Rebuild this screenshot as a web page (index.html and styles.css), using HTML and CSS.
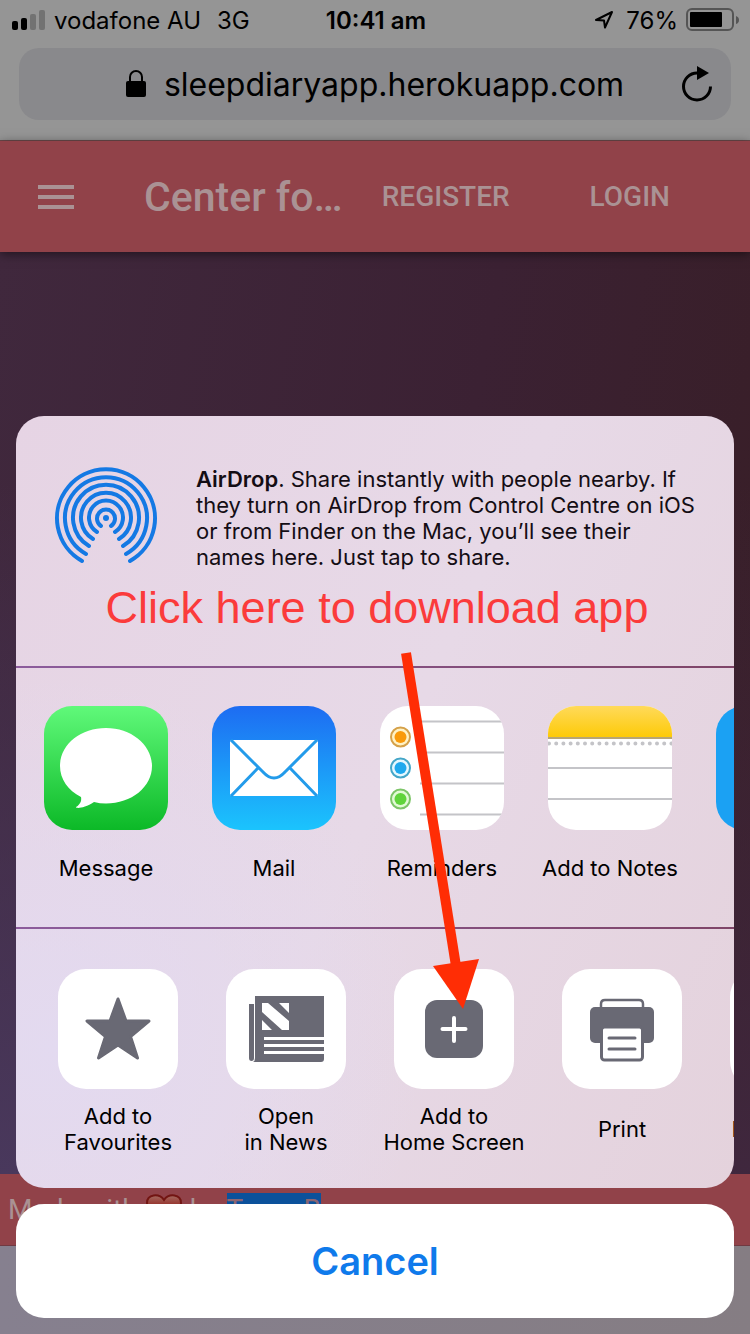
FILE: index.html
```html
<!DOCTYPE html>
<html lang="en">
<head>
<meta charset="utf-8">
<meta name="viewport" content="width=device-width, initial-scale=1">
<title>Sleep Diary</title>
<link rel="stylesheet" href="styles.css">
</head>
<body>
<div class="screen">
  <div class="status">
    <div class="status-side">
      <svg class="signal" width="34" height="20" viewBox="0 0 34 20" aria-hidden="true"><rect x="0" y="11" width="6" height="9" rx="2"/><rect x="9" y="8" width="6" height="12" rx="2"/><rect class="off" x="18" y="4" width="6" height="16" rx="2"/><rect class="off" x="27" y="0" width="6" height="20" rx="2"/></svg>
      <span>vodafone AU</span>
      <span class="network">3G</span>
    </div>
    <strong class="clock">10:41 am</strong>
    <div class="status-side status-right">
      <svg class="locate" width="20" height="20" viewBox="0 0 20 20" aria-hidden="true"><path d="M2 10 18 2 11 17.500 10 10.500Z"/></svg>
      <span class="percent">76%</span>
      <svg width="54" height="24" viewBox="0 0 54 24" aria-hidden="true"><rect x="1" y="1" width="46" height="21" rx="5" fill="none" stroke="#555" stroke-width="2"/><rect x="4" y="4" width="32" height="15" rx="1"/><path d="M50 8q3 1 3 4t-3 4Z" fill="#555"/></svg>
    </div>
  </div>
  <div class="address-row">
    <div class="address">
      <svg width="20" height="28" viewBox="0 0 20 28" aria-hidden="true"><path d="M4 13V7a6 6 0 0 1 12 0v6" fill="none" stroke="#000" stroke-width="2"/><rect y="11" width="20" height="16" rx="2"/></svg>
      <span>sleepdiaryapp.herokuapp.com</span>
      <button class="reload" aria-label="Reload"><svg width="34" height="38" viewBox="0 0 34 38"><path d="M30.500 21.500A13.500 13.500 0 1 1 17 8" fill="none" stroke="#000" stroke-width="3"/><path d="M17 1v14l12-7Z"/></svg></button>
    </div>
  </div>
  <header class="appbar">
    <button class="menu" aria-label="Menu"><svg width="36" height="24" viewBox="0 0 36 24"><path d="M0 2h36M0 12h36M0 22h36" stroke="#aa9294" stroke-width="4"/></svg></button>
    <h1>Center fo…</h1>
    <a class="nav register" href="#register">REGISTER</a>
    <a class="nav" href="#login">LOGIN</a>
  </header>
  <main class="backdrop"></main>
  <footer class="footer">
    <span>Made with</span>
    <svg class="heart" width="36" height="32" viewBox="0 0 36 32" aria-hidden="true"><defs><linearGradient id="heart" x2="0" y2="1"><stop stop-color="#a46960"/><stop offset=".5" stop-color="#8e1712"/></linearGradient></defs><path d="M18 30C9 24 1 17 1 9 1 0 13-1 18 6 23-1 35 0 35 9c0 8-8 15-17 21Z" fill="url(#heart)" stroke="#721512" stroke-width="2"/></svg>
    <span>by</span>
    <a href="#team">Team B</a>
  </footer>
  <div class="toolbar"></div>

  <div class="overlay" role="dialog" aria-label="Share">
    <div class="sheet">
      <section class="airdrop">
        <div class="airdrop-info">
          <svg class="waves" width="104" height="104" viewBox="-52 -52 104 104" aria-hidden="true"><circle r="3" class="dot"/><path d="M-5 8A9 9 0 1 1 5 8M-9 14A17 17 0 1 1 9 14M-13 21A25 25 0 1 1 13 21M-17 28A33 33 0 1 1 17 28M-20 36A41 41 0 1 1 20 36M-24 43A49 49 0 1 1 24 43"/></svg>
          <p><strong>AirDrop</strong>. Share instantly with people nearby. If<br>they turn on AirDrop from Control Centre on iOS<br>or from Finder on the Mac, you’ll see their<br>names here. Just tap to share.</p>
        </div>
        <p class="hint">Click here to download app</p>
      </section>
      <section class="row apps">
        <button class="item">
          <svg class="tile" viewBox="0 0 124 124"><defs><linearGradient id="green" x2="0" y2="1"><stop stop-color="#60f97a"/><stop offset="1" stop-color="#0cb927"/></linearGradient></defs><rect width="124" height="124" fill="url(#green)"/><path d="M62 22C36.500 22 16 38.500 16 60c0 13 8 24.500 21 31 1 5-2 8-5 10 0 2 9 1 18-5 4 1 8 1.500 12 1.500 25.500 0 46-16.500 46-37.500S87.500 22 62 22Z" fill="#fff"/></svg>
          <span>Message</span>
        </button>
        <button class="item">
          <svg class="tile" viewBox="0 0 124 124"><defs><linearGradient id="blue" x2="0" y2="1"><stop stop-color="#1d6cf2"/><stop offset="1" stop-color="#1bc4fd"/></linearGradient></defs><rect width="124" height="124" fill="url(#blue)"/><rect x="18" y="34" width="88" height="56" rx="2" fill="#fff"/><path d="M19 34 51 66Q62 78 73 66L105 34M19 90 46 62M105 90 78 62" fill="none" stroke="#239bea" stroke-width="3"/></svg>
          <span>Mail</span>
        </button>
        <button class="item">
          <svg class="tile" viewBox="0 0 124 124"><rect width="124" height="124" fill="#fff"/><path d="M40 15.500h84M40 46.500h84M40 77.500h84M40 108.500h84" stroke="#c4c4c8" stroke-width="2"/><g fill="#fff2c5" stroke="#d5a149" stroke-width="2"><circle cx="20.500" cy="31" r="9.500"/><circle cx="20.500" cy="62" r="9.500" fill="#e4f8ff" stroke="#44a6c8"/><circle cx="20.500" cy="93" r="9.500" fill="#e2fad5" stroke="#7dc568"/></g><circle cx="20.500" cy="31" r="6" fill="#f99a0b"/><circle cx="20.500" cy="62" r="6" fill="#1fa9ee"/><circle cx="20.500" cy="93" r="6" fill="#60d43b"/></svg>
          <span>Reminders</span>
        </button>
        <button class="item">
          <svg class="tile" viewBox="0 0 124 124"><defs><linearGradient id="yellow" x2="0" y2="1"><stop stop-color="#ffda5a"/><stop offset="1" stop-color="#fdca08"/></linearGradient></defs><rect width="124" height="124" fill="#fff"/><rect width="124" height="31" fill="url(#yellow)"/><path d="M0 32h124" stroke="#b7a675" stroke-width="2"/><path d="M0 62h124M0 93h124" stroke="#c4c4c8" stroke-width="2"/><path d="M1 37.500h124" stroke="#c4c4c8" stroke-width="4" stroke-linecap="round" stroke-dasharray="0 7.200"/></svg>
          <span>Add to Notes</span>
        </button>
        <button class="item" aria-label="More apps">
          <svg class="tile" viewBox="0 0 124 124"><rect width="124" height="124" fill="#1ba1f3"/></svg>
        </button>
      </section>
      <section class="row actions">
        <button class="item">
          <svg class="tile" viewBox="0 0 120 120"><path d="m60 30 8 22h23l-18.500 15.500L79.500 89 60 76 40.500 89l7-21.500L29 52h23Z" fill="#696974" stroke="#696974" stroke-width="3" stroke-linejoin="round"/></svg>
          <span>Add to<br>Favourites</span>
        </button>
        <button class="item">
          <svg class="tile" viewBox="0 0 120 120"><path d="M29 27h69v63q0 3-3 3H27q2-1 2-4Z" fill="#696974"/><path d="M23 35h5v54q0 3-2.500 3T23 89Z" fill="#696974"/><path d="M36 34h6l21 18v9h-7L36 43ZM53 34h10v10ZM36 51v10h10Z" fill="#fff"/><path d="M38 69.500h60M38 76.500h60M38 83.500h60" stroke="#fff" stroke-width="3"/></svg>
          <span>Open<br>in News</span>
        </button>
        <button class="item">
          <svg class="tile" viewBox="0 0 120 120"><rect x="31" y="31" width="58" height="58" rx="12" fill="#696974"/><path d="M60 49v23M48.500 60h23" stroke="#fff" stroke-width="4" stroke-linecap="round"/></svg>
          <span>Add to<br>Home Screen</span>
        </button>
        <button class="item">
          <svg class="tile" viewBox="0 0 120 120"><path d="M39 40v-5q0-4 4-4h34q4 0 4 4v5" fill="none" stroke="#696974" stroke-width="2.500"/><rect x="28" y="38" width="64" height="36" rx="5" fill="#696974"/><rect x="39.500" y="58" width="41" height="33" rx="3" fill="#fff" stroke="#696974" stroke-width="3"/><path d="M47 69h26M47 80h26" stroke="#696974" stroke-width="3" stroke-linecap="round"/></svg>
          <span>Print</span>
        </button>
        <button class="item">
          <svg class="tile" viewBox="0 0 120 120" aria-hidden="true"></svg>
          <span>Bookmarks</span>
        </button>
      </section>
      <svg class="arrow" width="80" height="360" viewBox="0 0 80 360" aria-hidden="true"><path d="M6 1 56 314" stroke="#ff2d05" stroke-width="10"/><path d="M33 314 79 307 63 357Z" fill="#ff2d05"/></svg>
    </div>
    <button class="cancel">Cancel</button>
  </div>
</div>
</body>
</html>
```
FILE: styles.css
```css
* { box-sizing: border-box; }

body {
  margin: 0;
  font-family: Inter, "Liberation Sans", sans-serif;
  color: #000;
}

h1, p { margin: 0; }

button {
  padding: 0;
  border: 0;
  background: none;
  font: inherit;
  color: inherit;
}

svg { display: block; flex: none; }

.screen {
  position: relative;
  display: flex;
  flex-direction: column;
  min-height: 100vh;
  overflow: hidden;
}

.status {
  display: grid;
  grid-template-columns: 1fr auto 1fr;
  align-items: center;
  height: 40px;
  padding: 0 10px 0 12px;
  background: #959595;
  font-size: 24px;
}

.status-side { display: flex; align-items: center; gap: 8px; }
.status-right { justify-content: flex-end; }
.network { margin-left: 8px; }
.percent { margin-left: 4px; }
.clock { font-weight: 600; }
.signal .off { fill: #727272; }
.locate { fill: none; stroke: #000; stroke-width: 2; stroke-linejoin: round; }

.address-row {
  padding: 8px 19px 20px;
  background: #959595;
  border-bottom: 1px solid #6c4a4c;
}

.address {
  position: relative;
  display: flex;
  align-items: center;
  justify-content: center;
  gap: 18px;
  height: 72px;
  border-radius: 20px;
  background: #89898c;
  font-size: 32px;
}

.reload { position: absolute; right: 17px; }

.appbar {
  position: relative;
  display: flex;
  align-items: center;
  height: 111px;
  padding: 0 80px 0 38px;
  background: #914249;
  color: #aa9294;
  font-family: Roboto, "Liberation Sans", sans-serif;
  box-shadow: 0 2px 10px rgba(0, 0, 0, 0.5);
}

.appbar h1 { margin: 0 auto 0 70px; font-size: 41px; font-weight: 500; }
.nav { color: inherit; font-size: 28px; font-weight: 500; text-decoration: none; }
.register { margin-right: 80px; }

.backdrop {
  flex: 1;
  background:
    linear-gradient(to top, rgba(74, 58, 96, 0.9), rgba(74, 58, 96, 0) 75%) left / 50% 100% no-repeat,
    linear-gradient(to top, rgba(64, 40, 64, 0.9), rgba(64, 40, 64, 0) 75%) right / 50% 100% no-repeat,
    linear-gradient(100deg, #40283d, #3b2133 55%, #381e25);
}

.footer {
  display: flex;
  align-items: center;
  gap: 8px;
  height: 72px;
  padding: 0 8px;
  background: #914249;
  color: #aa9294;
  font: 28px "Roboto", "Liberation Sans", sans-serif;
  border-bottom: 1px solid #703a42;
}

.footer a { background: #0b519b; color: #8d6673; }

.toolbar { height: 88px; background: linear-gradient(90deg, #86808f, #857d83); }

.overlay {
  position: absolute;
  right: 16px;
  bottom: 16px;
  left: 16px;
  display: flex;
  flex-direction: column;
  gap: 16px;
}

.sheet {
  position: relative;
  overflow: hidden;
  border-radius: 28px;
  background:
    radial-gradient(circle at 5% 82%, #e3daf0, rgba(227, 218, 240, 0) 40%),
    linear-gradient(115deg, #e6d4e4, #e7d9e7 50%, #e4d2dc);
}

.airdrop { height: 250px; padding: 50px 16px 0 38px; }
.airdrop-info { display: flex; gap: 38px; color: #140d14; font-size: 22px; line-height: 26px; white-space: nowrap; }
.airdrop strong { font-weight: 600; }
.waves { fill: none; stroke: #1479e4; stroke-width: 4; stroke-linecap: round; }
.waves .dot { fill: #1479e4; stroke: none; }

.hint {
  margin-top: 12px;
  padding-right: 18px;
  color: #fb3b3b;
  font: 45px/52px "Liberation Sans", Arial, sans-serif;
  text-align: center;
  white-space: nowrap;
}

.row {
  display: flex;
  height: 261px;
  overflow: hidden;
  background: linear-gradient(90deg, #8c5c9c, #7f4568) top / 100% 2px no-repeat;
}

.apps { padding: 40px 0 0 6px; }
.actions { padding: 42px 0 0 18px; }

.item {
  display: flex;
  flex: none;
  flex-direction: column;
  align-items: center;
  width: 168px;
  height: 200px;
  font-size: 22px;
  line-height: 26px;
  white-space: nowrap;
}

.item span { margin: auto 0; }

.tile { border-radius: 28px; }
.apps .tile { width: 124px; height: 124px; }
.actions .tile { width: 120px; height: 120px; background: #fff; }

.arrow { position: absolute; top: 236px; left: 384px; }

.cancel {
  height: 114px;
  border-radius: 28px;
  background: #fff;
  color: #0f7aeb;
  font-size: 38px;
  font-weight: 600;
}
```
